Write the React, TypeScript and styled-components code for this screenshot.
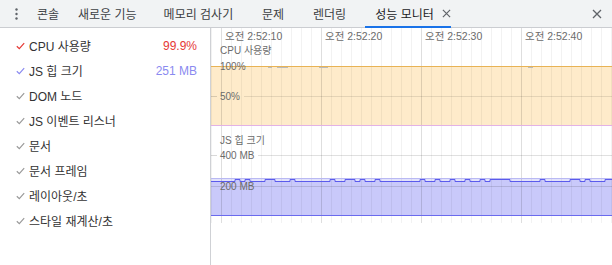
import React from "react";
import styled, { createGlobalStyle } from "styled-components";

const Global = createGlobalStyle`
  html, body { margin: 0; padding: 0; background: #fff; }
  body { font-family: "Liberation Sans", "Noto Sans CJK KR", sans-serif; }
  * { box-sizing: border-box; }
`;

const Page = styled.div`
  width: 612px;
  height: 265px;
  display: flex;
  flex-direction: column;
  overflow: hidden;
`;

const TabBar = styled.div`
  height: 28px;
  flex: none;
  display: flex;
  align-items: stretch;
  background: #f1f3f4;
  border-bottom: 1px solid #cbcdd1;
`;

const Kebab = styled.div`
  width: 27px;
  display: flex;
  align-items: center;
  justify-content: center;
  padding-left: 5px;
`;

const Tab = styled.div<{ $w: number; $active?: boolean }>`
  width: ${(p) => p.$w}px;
  flex: none;
  display: flex;
  align-items: center;
  gap: 8px;
  padding-left: 10px;
  font-size: 12px;
  color: ${(p) => (p.$active ? "#202124" : "#3c4043")};
  position: relative;
  white-space: nowrap;
  ${(p) =>
    p.$active &&
    `&::after { content: ""; position: absolute; left: 0; right: 0; bottom: -1px; height: 2px; background: #1a73e8; }`}
`;

const CloseAll = styled.div`
  margin-left: auto;
  width: 28px;
  display: flex;
  align-items: center;
  justify-content: center;
  padding-right: 2px;
`;

const Body = styled.div`
  flex: 1;
  display: flex;
  min-height: 0;
`;

const Sidebar = styled.div`
  width: 211px;
  flex: none;
  border-right: 1px solid #cfd1d5;
  padding-top: 5px;
  display: flex;
  flex-direction: column;
`;

const Row = styled.div`
  height: 25px;
  display: flex;
  align-items: center;
  padding: 0 13px 0 16px;
  font-size: 12px;
  color: #333;
`;

const Label = styled.span`
  margin-left: 4px;
  flex: 1;
`;

const Value = styled.span<{ $color: string }>`
  color: ${(p) => p.$color};
`;

const ChartArea = styled.div`
  flex: 1;
  svg { display: block; }
`;

const ChartText = styled.text<{ $size?: number }>`
  font-family: "Liberation Sans", "Noto Sans CJK KR", sans-serif;
  font-size: ${(p) => p.$size ?? 10}px;
  fill: #6b6b6b;
`;

const Check = ({ color }: { color: string }) => (
  <svg width="9" height="8" viewBox="0 0 9 8">
    <path d="M0.8 4.2 L3.3 6.6 L8.2 1.2" fill="none" stroke={color} strokeWidth="1.2" />
  </svg>
);

const XIcon = ({ size, color }: { size: number; color: string }) => (
  <svg width={size} height={size} viewBox="0 0 10 10">
    <path d="M1 1 L9 9 M9 1 L1 9" stroke={color} strokeWidth="1.3" fill="none" />
  </svg>
);

const tabs = [
  { t: "콘솔", w: 41 },
  { t: "새로운 기능", w: 85.6 },
  { t: "메모리 검사기", w: 98.4 },
  { t: "문제", w: 51 },
  { t: "렌더링", w: 62.3 },
];

const metrics: { t: string; v?: string; c: string }[] = [
  { t: "CPU 사용량", v: "99.9%", c: "#e53935" },
  { t: "JS 힙 크기", v: "251 MB", c: "#8a8af0" },
  { t: "DOM 노드", c: "#9a9a9a" },
  { t: "JS 이벤트 리스너", c: "#9a9a9a" },
  { t: "문서", c: "#9a9a9a" },
  { t: "문서 프레임", c: "#9a9a9a" },
  { t: "레이아웃/초", c: "#9a9a9a" },
  { t: "스타일 재계산/초", c: "#9a9a9a" },
];

const W = 401;
const H = 237;

const bumps: [number, number][] = [
  [24, 29], [34, 39], [54, 64], [79, 84], [119, 124], [134, 144], [149, 154],
  [164, 169], [209, 214], [224, 229], [239, 244], [254, 259], [269, 274],
  [279, 299], [329, 334], [359, 369], [374, 379], [394, 402],
];

function heapPath() {
  const base = 153;
  const up = 151;
  let d = `M0 ${base}`;
  for (const [a, b] of bumps) {
    d += ` L${a} ${base} L${a} ${up} L${b} ${up} L${b} ${base}`;
  }
  d += ` L${W} ${base}`;
  return d;
}

function Chart() {
  const vlines = [];
  for (let x = 0; x <= W; x += 10) {
    const major = (x - 10) % 100 === 0;
    vlines.push(
      <line
        key={x}
        x1={x + 0.5}
        x2={x + 0.5}
        y1={0}
        y2={195}
        stroke={major ? "rgba(0,0,0,0.13)" : "rgba(0,0,0,0.05)"}
        strokeWidth={1}
      />
    );
  }
  const times = ["오전 2:52:10", "오전 2:52:20", "오전 2:52:30", "오전 2:52:40"];
  const hp = heapPath();
  return (
    <svg width={W} height={H} viewBox={`0 0 ${W} ${H}`}>
      <rect x={0} y={38} width={W} height={60} fill="#feebca" />
      <rect x={0} y={150} width={W} height={3} fill="#e2e2fb" />
      <path d={`${hp} L${W} 188 L0 188 Z`} fill="#c9c9fa" />
      {vlines}
      <line x1={0} x2={W} y1={38.5} y2={38.5} stroke="#e8b355" />
      <line x1={0} x2={W} y1={97.5} y2={97.5} stroke="#e2b2e6" />
      <line x1={0} x2={6} y1={68.5} y2={68.5} stroke="rgba(0,0,0,0.15)" />
      <line x1={33} x2={W} y1={68.5} y2={68.5} stroke="rgba(0,0,0,0.1)" />
      <path d="M57 39.5 L61 39.5 M66 39.5 L77 39.5 M108 39.5 L117 39.5 M317 39.5 L322 39.5" stroke="#bbb" strokeWidth="1" />
      <line x1={0} x2={6} y1={127.5} y2={127.5} stroke="rgba(0,0,0,0.15)" />
      <line x1={47} x2={W} y1={127.5} y2={127.5} stroke="rgba(0,0,0,0.12)" />
      <line x1={0} x2={W} y1={150.5} y2={150.5} stroke="#b9b9f3" />
      <line x1={0} x2={W} y1={158.5} y2={158.5} stroke="rgba(0,0,0,0.12)" />
      <path d={hp} transform="translate(0 0.5)" fill="none" stroke="#5b5bec" strokeWidth="1" />
      <line x1={0} x2={W} y1={187.5} y2={187.5} stroke="#6a6aee" />
      {times.map((t, i) => (
        <ChartText key={t} x={14 + i * 100} y={12} $size={10.5}>
          {t}
        </ChartText>
      ))}
      <ChartText x={9} y={26}>CPU 사용량</ChartText>
      <ChartText x={9} y={41.5}>100%</ChartText>
      <ChartText x={9} y={71.5}>50%</ChartText>
      <ChartText x={9} y={116}>JS 힙 크기</ChartText>
      <ChartText x={9} y={131}>400 MB</ChartText>
      <ChartText x={9} y={161.5}>200 MB</ChartText>
    </svg>
  );
}

export default function App() {
  return (
    <Page>
      <Global />
      <TabBar>
        <Kebab>
          <svg width="3" height="12" viewBox="0 0 3 12">
            <circle cx="1.5" cy="1.5" r="1.2" fill="#5f6368" />
            <circle cx="1.5" cy="6" r="1.2" fill="#5f6368" />
            <circle cx="1.5" cy="10.5" r="1.2" fill="#5f6368" />
          </svg>
        </Kebab>
        {tabs.map((t) => (
          <Tab key={t.t} $w={t.w}>
            {t.t}
          </Tab>
        ))}
        <Tab $w={86} $active>
          성능 모니터
          <XIcon size={9} color="#5f6368" />
        </Tab>
        <CloseAll>
          <XIcon size={10} color="#5f6368" />
        </CloseAll>
      </TabBar>
      <Body>
        <Sidebar>
          {metrics.map((m) => (
            <Row key={m.t}>
              <Check color={m.c} />
              <Label>{m.t}</Label>
              {m.v && <Value $color={m.c}>{m.v}</Value>}
            </Row>
          ))}
        </Sidebar>
        <ChartArea>
          <Chart />
        </ChartArea>
      </Body>
    </Page>
  );
}
